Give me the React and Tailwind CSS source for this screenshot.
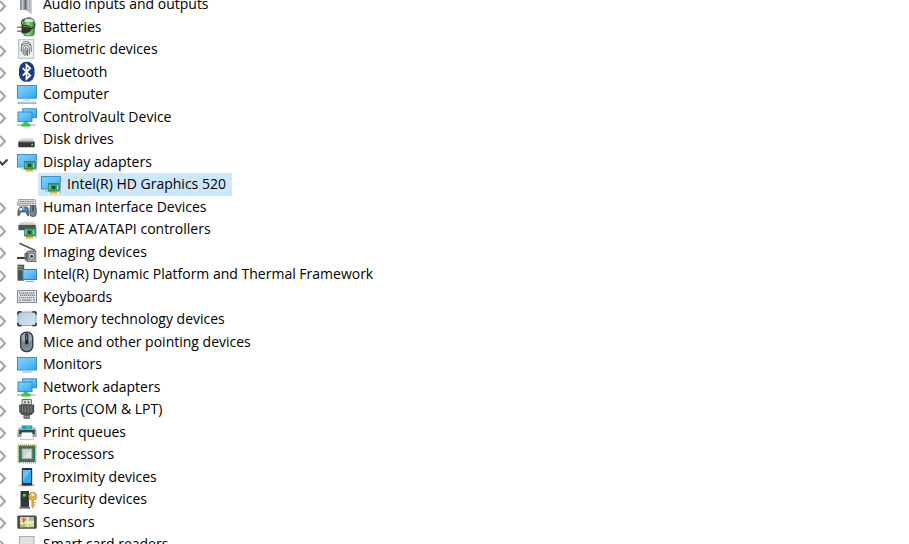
import { useState } from "react";

function Defs() {
  return (
    <svg width="0" height="0" className="absolute" aria-hidden="true">
      <defs>
        <linearGradient id="screen" x1="0" y1="0" x2="1" y2="1">
          <stop offset="0" stopColor="#7fd0fb" />
          <stop offset="0.5" stopColor="#5fc0fb" />
          <stop offset="1" stopColor="#2ba3f4" />
        </linearGradient>
        <linearGradient id="steel" x1="0" y1="0" x2="0" y2="1">
          <stop offset="0" stopColor="#f4f4f4" />
          <stop offset="1" stopColor="#b5b8ba" />
        </linearGradient>
        <linearGradient id="cone" x1="0" y1="0" x2="1" y2="0">
          <stop offset="0" stopColor="#5d656c" />
          <stop offset="0.5" stopColor="#c9ced2" />
          <stop offset="1" stopColor="#7c848a" />
        </linearGradient>
        <linearGradient id="cell" x1="0" y1="0" x2="1" y2="0">
          <stop offset="0" stopColor="#2a9c33" />
          <stop offset="0.4" stopColor="#8fe07c" />
          <stop offset="1" stopColor="#2f9a35" />
        </linearGradient>
        <linearGradient id="glass" x1="0" y1="0" x2="1" y2="1">
          <stop offset="0" stopColor="#b4cadb" />
          <stop offset="1" stopColor="#d9e7f1" />
        </linearGradient>
      </defs>
    </svg>
  );
}

function Card() {
  return (
    <g>
      <rect x="9" y="17" width="7" height="3.5" fill="#f0a818" />
      <path d="M11.5 17.5v3M14 17.5v3" stroke="#fbd469" strokeWidth="0.7" />
      <rect x="7.5" y="10.5" width="11" height="7.5" fill="#43a06c" stroke="#2b7f54" strokeWidth="0.8" />
      <rect x="10.8" y="12.8" width="3.6" height="3.2" fill="#1d4a35" />
      <path d="M16.5 12.2v4.2" stroke="#a5dcb6" />
      <path d="M8.7 12v4.5" stroke="#b9e2c4" strokeWidth="0.7" />
      <path d="M19.3 9v11" stroke="#a7afb3" strokeWidth="0.9" />
    </g>
  );
}

function Linked() {
  return (
    <g>
      <rect x="5.7" y="2.8" width="13.8" height="9" fill="url(#screen)" stroke="#2f86bd" strokeWidth="0.9" />
      <rect x="1" y="6" width="14" height="9.6" fill="url(#screen)" stroke="#2f86bd" strokeWidth="0.9" />
      <rect x="6.5" y="16" width="4.5" height="2" fill="#58bd62" />
      <rect x="0" y="18.2" width="18.5" height="1.8" fill="#c2cbc6" />
      <rect x="4.5" y="17.6" width="9" height="2.8" rx="0.6" fill="#35c843" />
    </g>
  );
}

const ICONS = {
  audio: (
    <g>
      <rect x="3.2" y="5" width="4.5" height="12" fill="url(#cone)" />
      <path d="M8 5.5 14.5 1v20L8 16.5z" fill="url(#cone)" />
      <path d="M8 5.5v11" stroke="#4c545b" strokeWidth="0.8" />
      <path d="M14 2v18" stroke="#dfe3e6" />
    </g>
  ),
  battery: (
    <g>
      <rect x="9.5" y="1" width="5" height="2.6" rx="1" fill="#8f979b" />
      <rect x="6.5" y="2.6" width="10.8" height="17.2" rx="2.6" fill="url(#cell)" stroke="#66706b" strokeWidth="0.9" />
      <ellipse cx="12" cy="4.5" rx="4.6" ry="1.5" fill="#d7e8d4" />
      <path d="M13.5 12.5c4-.3 5-2.5 4-5.5M6 10C3.5 7 4.5 3.5 8 3.3" fill="none" stroke="#3c3c3a" strokeWidth="1.4" />
      <path d="M0 11.3h5M0 15.3h5" stroke="#9b8344" strokeWidth="1.4" />
      <path d="M4.5 9H9c3 0 5 2 5.500 3.800-.5 2-2.500 4.400-5.500 4.400H4.500z" fill="#35322e" />
      <path d="M6 10.500h3.500c1.500 0 2.500.6 3 1.300" fill="none" stroke="#86827b" />
    </g>
  ),
  biometric: (
    <g>
      <rect x="1.7" y="1.7" width="15" height="18.6" fill="#edf3f1" stroke="#a5c4bb" />
      <g fill="none" stroke="#666b6a" strokeWidth="1">
        <path d="M4.500 8C5 4.500 7 3.700 9.200 3.700S13.500 4.700 14 8" />
        <path d="M4.300 14V10c0-2.800 2-4.300 4.900-4.300s5 1.500 5 4.300v4" />
        <path d="M6.200 16.500V10.500c0-2 1.200-2.800 3-2.800s3.100.8 3.100 2.800v6" />
        <path d="M8 18v-7c0-.8.400-1.300 1.200-1.300s1.300.5 1.300 1.300v7M9.200 12v5" />
      </g>
    </g>
  ),
  bluetooth: (
    <g>
      <rect x="2" y="0.8" width="15.5" height="20" rx="7.4" fill="#173f80" />
      <path d="m5.800 7.200 7.400 7.200-3.700 3.500V3.800l3.700 3.500-7.400 7.300" fill="none" stroke="#fff" strokeWidth="1.8" />
    </g>
  ),
  computer: (
    <g>
      <rect x="0.5" y="2.5" width="19" height="12.7" fill="url(#screen)" stroke="#3b92cb" />
      <path d="M8 15.700h4v1.300H8z" fill="#c5d3dc" />
      <path d="M5.500 17.300h9" stroke="#d2dbe1" />
      <path d="M0.500 20h19" stroke="#93a5b3" strokeWidth="1.6" />
      <path d="M2 19h16" stroke="#ccd6dd" />
    </g>
  ),
  linked: <Linked />,
  disk: (
    <g>
      <path d="M4 9.500h11.500l2 4.500H1.500z" fill="url(#steel)" />
      <rect x="1.3" y="13.7" width="16.4" height="5.6" rx="0.8" fill="#363636" />
      <path d="M1.500 14.100h16" stroke="#777" strokeWidth="0.7" />
      <rect x="14.3" y="15.7" width="1.8" height="1.8" fill="#4de251" />
    </g>
  ),
  display: (
    <g>
      <rect x="0.5" y="3.5" width="19" height="12.5" fill="url(#screen)" stroke="#3b92cb" />
      <path d="M4 18h5" stroke="#9fb2bf" />
      <Card />
    </g>
  ),
  hid: (
    <g>
      <path d="M1.500 3.500h16.500l1 6H.7z" fill="#d5d8da" stroke="#8b9095" strokeWidth="0.8" />
      <path d="M3 5.500h13.500M2.500 7.500H17" stroke="#7b8288" strokeWidth="1" strokeDasharray="1.5 1" />
      <path d="M.7 20c-.7-4 .2-9 2.400-9.500h6.600c2.200.5 3.100 5.500 2.300 9.500-1.300 1.200-2.500-1-3.200-3.500H4C3.300 19 2 21.200.7 20z" fill="#5d666e" />
      <circle cx="3.700" cy="13.200" r="1.500" fill="#e7edf1" />
      <circle cx="8.600" cy="13.600" r="1.600" fill="#259be8" />
      <rect x="5.2" y="10.5" width="2" height="3" fill="#88c9f2" />
      <rect x="13" y="9.5" width="6.2" height="11" rx="2.8" fill="#7e878e" stroke="#474e54" strokeWidth="0.9" />
      <path d="M16.100 10v5.500" stroke="#30363b" strokeWidth="1.2" />
    </g>
  ),
  ide: (
    <g>
      <path d="M4 3.300h12.500l2.300 4H1.500z" fill="url(#steel)" />
      <rect x="1.3" y="7" width="17.6" height="5.2" rx="0.8" fill="#505353" />
      <Card />
    </g>
  ),
  camera: (
    <g>
      <path d="m2.500 2.300 15.800 7.200" stroke="#565656" strokeWidth="1.7" />
      <path d="M0 17h8" stroke="#3e3e3e" strokeWidth="2" />
      <path d="m7.500 12.500 4-3h7.800v11.500h-9l-2.800-2.500z" fill="#6a6e70" />
      <path d="M11 10.800h7.500v9.200H11z" fill="#a5aaac" />
      <circle cx="14.700" cy="15.200" r="3.200" fill="#eceeee" stroke="#5e6264" />
      <circle cx="14.700" cy="15.200" r="1.500" fill="#313638" />
    </g>
  ),
  tower: (
    <g>
      <rect x="0.5" y="1.7" width="6.7" height="16" fill="#4b5154" />
      <path d="M1.500 4h4.700M1.500 6.500h4.700" stroke="#a4abae" strokeWidth="0.9" />
      <rect x="1.5" y="3" width="1.7" height="1.5" fill="#4bd655" />
      <rect x="5.9" y="6.5" width="13.7" height="10" fill="url(#screen)" stroke="#3580b0" />
      <path d="M8.500 18.500h8.500" stroke="#98a6b0" strokeWidth="1.2" />
    </g>
  ),
  keyboard: (
    <g>
      <rect x="0.5" y="4.5" width="19" height="12" fill="#e1e4e5" stroke="#858d93" />
      <path d="M2 7h16M3 9.300h15M2 11.600h16" stroke="#7d8489" strokeWidth="1.4" strokeDasharray="1.3 0.7" />
      <path d="M2 14.200h2M5 14.200h9.500M16 14.200h2" stroke="#7d8489" strokeWidth="1.3" />
    </g>
  ),
  memory: (
    <g>
      <rect x="1" y="4" width="18" height="13.5" rx="1.5" fill="url(#glass)" stroke="#93a5b2" />
      <path d="M1 6.500V4.800Q1 3.900 2 3.900h2.500M15.500 3.900H18q1 0 1 .9v1.700M1 15v1.800q0 .9 1 .9h2.500M15.500 17.700H18q1 0 1-.9V15" fill="none" stroke="#3b4248" strokeWidth="1.8" />
    </g>
  ),
  mouse: (
    <g>
      <rect x="3.7" y="1.2" width="12" height="19.3" rx="5.5" fill="#a3aeb9" stroke="#343a40" strokeWidth="1.5" />
      <path d="M5 8.500c2 3.500 7.500 3.500 9.500 0V16c-1 4-8.500 4-9.500 0z" fill="#7b8894" />
      <rect x="8.1" y="2.5" width="3.3" height="11" rx="1.4" fill="#20262b" />
      <path d="M9.700 4v5" stroke="#8b97a0" strokeWidth="0.9" />
    </g>
  ),
  monitor: (
    <g>
      <rect x="0.5" y="4.5" width="19" height="12.5" fill="url(#screen)" stroke="#3b92cb" />
      <path d="M8 17.500h4v1.200H8z" fill="#b6c5cf" />
      <path d="M5 19h10" stroke="#9fb0bb" />
    </g>
  ),
  port: (
    <g>
      <path d="M5 1.500h9.500v5H5z" fill="#d5d8d9" stroke="#6e7376" />
      <path d="M8 3.200v2M11.500 3.200v2" stroke="#45494b" strokeWidth="1.4" />
      <path d="M2.200 6.500h15v7.500l-2.700 3H4.900l-2.700-3z" fill="#505355" />
      <path d="M5.500 8v6M8.300 8v6.500M11.200 8v6.500M14 8v6" stroke="#8a8e90" strokeWidth="0.9" />
      <path d="M6.500 17h6.500v3.800H6.500z" fill="#64686a" />
      <path d="M6.500 18.800h6.500" stroke="#a6aaac" strokeWidth="0.8" />
    </g>
  ),
  printer: (
    <g>
      <path d="M4.500 4.500h11v4h-11z" fill="#2596e2" />
      <path d="M9.500 4.500h4v4h-4z" fill="#3cc8a2" />
      <path d="M1.500 6.500h3v2h11v-2h3l1.300 3v6H.3v-6z" fill="#b9bec1" />
      <path d="M2 8.800h16v4.300H2z" fill="#3e4346" />
      <path d="M.4 13h19.200v3H.4z" fill="#9ba1a5" />
      <path d="M5 11.500h10l1.500 7h-13z" fill="#f8f9f9" stroke="#aeb3b6" strokeWidth="0.7" />
    </g>
  ),
  processor: (
    <g>
      <rect x="1" y="1.8" width="18" height="18" fill="none" stroke="#c3ae6b" strokeWidth="1.500" strokeDasharray="1 1" />
      <rect x="1.7" y="2.5" width="16.6" height="16.6" fill="#3a7158" />
      <rect x="5.200" y="6" width="9.600" height="9.600" fill="#e2e4e3" stroke="#a6ada9" />
      <path d="M6 15V7h8z" fill="#cfd3d1" />
    </g>
  ),
  phone: (
    <g>
      <ellipse cx="10" cy="19.300" rx="9" ry="1.500" fill="#f9c8a4" />
      <path d="M3.500 19.300h13" stroke="#ee8b4c" />
      <rect x="4.8" y="2" width="10.4" height="17.6" rx="1" fill="#293036" />
      <rect x="5.9" y="4" width="8.2" height="13" fill="#3aa9f5" />
      <path d="M5.900 4h8.200L5.900 15z" fill="#68c2fa" />
    </g>
  ),
  security: (
    <g>
      <path d="M3.500 3h8.500v16H3.500z" fill="#343638" />
      <path d="M2.500 18.700h10.500v2H2.500z" fill="#6d7072" />
      <rect x="6" y="6" width="2.7" height="2.5" fill="#38ed4d" />
      <circle cx="15.700" cy="8.300" r="4" fill="#e5b34c" stroke="#bc852b" strokeWidth="0.7" />
      <circle cx="15.700" cy="6.800" r="1.300" fill="#fff" />
      <path d="M14.400 12H17v7l-1.300 1.500-1.300-1.500z" fill="#dfa63d" />
      <path d="M17 14.500h1.500M17 17h1.500" stroke="#c38c2d" strokeWidth="1.2" />
    </g>
  ),
  sensor: (
    <g>
      <rect x="0.3" y="4.5" width="19.4" height="13.3" rx="1.3" fill="#484b4d" />
      <rect x="3" y="6" width="14" height="10.2" fill="#c8d997" />
      <path d="M3 12.500 17 11M11 6v10.200M3 8.500l14 5.500" stroke="#f6eeb6" strokeWidth="1.3" />
      <path d="M12 6h5v3.500h-5zM3 13.500h5v2.700H3z" fill="#9ec577" />
      <circle cx="6.800" cy="8.600" r="1.700" fill="#e15857" />
      <path d="M6.800 9.500V12" stroke="#bd3d3d" />
    </g>
  ),
  smartcard: (
    <g>
      <rect x="2.5" y="3.5" width="14.5" height="17" fill="#dfe1e3" stroke="#a9adb0" />
      <path d="M5 16h9" stroke="#bbb" />
    </g>
  ),
};

const DEVICES = [
  { name: "Audio inputs and outputs", icon: "audio" },
  { name: "Batteries", icon: "battery" },
  { name: "Biometric devices", icon: "biometric" },
  { name: "Bluetooth", icon: "bluetooth" },
  { name: "Computer", icon: "computer" },
  { name: "ControlVault Device", icon: "linked" },
  { name: "Disk drives", icon: "disk" },
  { name: "Display adapters", icon: "display", child: "Intel(R) HD Graphics 520" },
  { name: "Human Interface Devices", icon: "hid" },
  { name: "IDE ATA/ATAPI controllers", icon: "ide" },
  { name: "Imaging devices", icon: "camera" },
  { name: "Intel(R) Dynamic Platform and Thermal Framework", icon: "tower" },
  { name: "Keyboards", icon: "keyboard" },
  { name: "Memory technology devices", icon: "memory" },
  { name: "Mice and other pointing devices", icon: "mouse" },
  { name: "Monitors", icon: "monitor" },
  { name: "Network adapters", icon: "linked" },
  { name: "Ports (COM & LPT)", icon: "port" },
  { name: "Print queues", icon: "printer" },
  { name: "Processors", icon: "processor" },
  { name: "Proximity devices", icon: "phone" },
  { name: "Security devices", icon: "security" },
  { name: "Sensors", icon: "sensor" },
  { name: "Smart card readers", icon: "smartcard" },
];

function DeviceIcon({ name }) {
  return (
    <svg viewBox="0 0 20 22" className="h-[22px] w-5 shrink-0" aria-hidden="true">
      {ICONS[name]}
    </svg>
  );
}

function Chevron({ open }) {
  return (
    <svg viewBox="0 0 17 22" className="h-[22px] w-[17px]" fill="none" aria-hidden="true">
      {open ? (
        <path d="m-1.500 9.500 4 4 5-5" stroke="#404040" strokeWidth="2.100" />
      ) : (
        <path d="m0 7 5 5.300-5 5.300" stroke="#a6a6a6" strokeWidth="2.100" />
      )}
    </svg>
  );
}

export default function App() {
  const [open, setOpen] = useState({ "Display adapters": true });

  // flat list of visible rows, children follow their open parent
  const rows = DEVICES.flatMap((d) =>
    d.child && open[d.name] ? [d, { name: d.child, icon: d.icon, nested: true }] : [d]
  );

  return (
    <main className="h-screen overflow-hidden bg-white font-['Open_Sans','Noto_Sans',sans-serif] text-[14px] leading-[22px] text-black">
      <Defs />
      <ul role="tree" aria-label="Devices" className="-mt-[7px]">
        {rows.map((row) =>
          row.nested ? (
            <li key={row.name} role="treeitem" aria-level={2} aria-selected="true" className="flex odd:h-[23px] even:h-[22px] pl-[38px]">
              <div className="flex gap-[6px] bg-[#cce8ff] pl-[3px] pr-[6px]">
                <DeviceIcon name={row.icon} />
                <span className="whitespace-nowrap">{row.name}</span>
              </div>
            </li>
          ) : (
            <li key={row.name} role="treeitem" aria-level={1} aria-expanded={!!open[row.name]} className="flex odd:h-[23px] even:h-[22px]">
              <button
                type="button"
                aria-label={`Toggle ${row.name}`}
                className="w-[17px] shrink-0"
                onClick={() => setOpen((o) => ({ ...o, [row.name]: !o[row.name] }))}
              >
                <Chevron open={open[row.name]} />
              </button>
              <DeviceIcon name={row.icon} />
              <span className="whitespace-nowrap pl-[6px]">{row.name}</span>
            </li>
          )
        )}
      </ul>
    </main>
  );
}
